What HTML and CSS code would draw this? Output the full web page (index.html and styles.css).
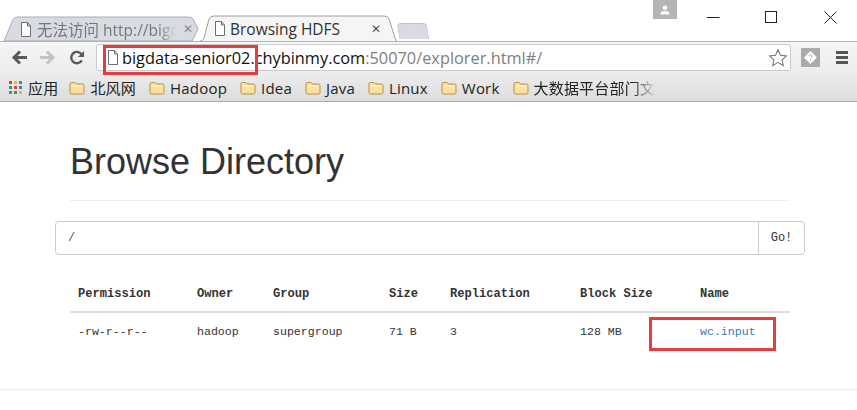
FILE: index.html
```html
<!DOCTYPE html>
<html lang="zh">
<head>
<meta charset="utf-8">
<title>Browsing HDFS</title>
<link rel="stylesheet" href="styles.css">
</head>
<body>
<svg width="0" height="0" class="defs">
  <symbol id="doc" viewBox="0 0 12 15"><path d="M1.500.5h6l3 3.500v10.500h-9z M7.500.5v3.500h3" fill="#fff" stroke="#6e6e6e"/></symbol>
  <symbol id="folder" viewBox="0 0 16 14"><path d="M1 3a1.500 1.500 0 0 1 1.500-1.500h3.500l1.500 1.500h6a1.500 1.500 0 0 1 1.500 1.500v7a1.500 1.500 0 0 1-1.500 1.500h-11a1.500 1.500 0 0 1-1.500-1.500z" fill="#fbdf9f" stroke="#b8913f"/><path d="M2 5h12" stroke="#fff3d4"/></symbol>
</svg>
<header class="chrome">
  <div class="tabstrip">
    <div class="tab tab-off">
      <svg class="tab-bg" viewBox="0 0 200 24" preserveAspectRatio="none"><path d="M0 24 L9 3 Q10 0 14 0 H188 Q192 0 193 2 L198 12 L192 24 Z" fill="#d8dce2" stroke="#a9adb3"/></svg>
      <svg class="ico-doc"><use href="#doc"/></svg>
      <span class="tab-title tab-fade">无法访问 http://bigd</span>
      <span class="tab-x x-off">✕</span>
    </div>
    <div class="tab tab-on">
      <svg class="tab-bg" viewBox="0 0 197 25" preserveAspectRatio="none"><path d="M0 25 H1 Q3 25 4 22 L9 3 Q10 0 14 0 H184 Q188 0 189 3 L195 22 Q196 25 197 25" fill="#f5f5f5" stroke="#a0a0a0"/></svg>
      <svg class="ico-doc"><use href="#doc"/></svg>
      <span class="tab-title">Browsing HDFS</span>
      <span class="tab-x">✕</span>
    </div>
    <div class="newtab"></div>
    <div class="winbtns">
      <div class="avatar"><svg width="12" height="10" viewBox="0 0 12 10"><circle cx="6" cy="2.800" r="2.300" fill="#fff"/><path d="M1.500 9.500c0-3 2-3.500 4.500-3.500s4.500.5 4.500 3.500z" fill="#fff"/></svg></div>
      <svg class="win" width="13" height="13" viewBox="0 0 13 13"><path d="M0 6.500h12.500" stroke="#222"/></svg>
      <svg class="win win-max" width="13" height="13" viewBox="0 0 13 13"><rect x=".5" y=".5" width="11" height="11" fill="none" stroke="#222"/></svg>
      <svg class="win win-close" width="13" height="13" viewBox="0 0 13 13"><path d="M.5.500l12 12M12.500.500l-12 12" stroke="#222"/></svg>
    </div>
  </div>
  <div class="toolbar">
    <svg class="nav" width="16" height="15" viewBox="0 0 16 15"><path d="M16 7.500H4M9 1.500l-6 6 6 6" fill="none" stroke="#5a5a5a" stroke-width="3"/></svg>
    <svg class="nav" width="16" height="15" viewBox="0 0 16 15"><path d="M0 7.500h12M7 1.500l6 6-6 6" fill="none" stroke="#c4c4c4" stroke-width="3"/></svg>
    <svg class="nav nav-last" width="16" height="17" viewBox="0 0 17 17"><path d="M13.600 11.500a6 6 0 1 1 .2-5.500" fill="none" stroke="#5a5a5a" stroke-width="2.600"/><path d="M16 1.500v6.500h-6.500z" fill="#5a5a5a"/></svg>
    <div class="omnibox">
      <svg class="ico-doc omni-doc"><use href="#doc"/></svg>
      <span class="url"><span class="url-host">bigdata-senior02.chybinmy.com</span>:50070/explorer.html#/</span>
      <svg class="star" width="20" height="19" viewBox="0 0 22 20"><path d="M11 1.500l2.800 6 6.500.7-4.800 4.400 1.300 6.400L11 15.400l-5.800 3.600 1.300-6.400-4.800-4.400 6.500-.7z" fill="#fff" stroke="#777" stroke-width="1.200"/></svg>
    </div>
    <div class="ext"><svg width="13" height="13" viewBox="0 0 13 13"><path d="M6.500 0L13 6.500 6.500 13 0 6.500z" fill="#fff"/><path d="M5 5.200a1.500 1.500 0 1 1 2 1.400c-.4.200-.5.500-.5 1M6.500 8.700v1" stroke="#aaa" fill="none"/></svg></div>
    <div class="menu"><i></i><i></i><i></i></div>
  </div>
  <div class="bookmarks">
    <svg class="apps" width="14" height="14" viewBox="0 0 14 14"><g>
      <rect x="0" y="0" width="3" height="3" fill="#d9453a"/><rect x="5" y="0" width="3" height="3" fill="#f0b429"/><rect x="10" y="0" width="3" height="3" fill="#3c9a4e"/>
      <rect x="0" y="5" width="3" height="3" fill="#3c9a4e"/><rect x="5" y="5" width="3" height="3" fill="#d9453a"/><rect x="10" y="5" width="3" height="3" fill="#3f7fdc"/>
      <rect x="0" y="10" width="3" height="3" fill="#3f7fdc"/><rect x="5" y="10" width="3" height="3" fill="#3c9a4e"/><rect x="10" y="10" width="3" height="3" fill="#f0b429"/></g></svg>
    <span class="bm bm-first">应用</span>
    <span class="bm"><svg class="folder"><use href="#folder"/></svg>北风网</span>
    <span class="bm"><svg class="folder"><use href="#folder"/></svg>Hadoop</span>
    <span class="bm"><svg class="folder"><use href="#folder"/></svg>Idea</span>
    <span class="bm"><svg class="folder"><use href="#folder"/></svg>Java</span>
    <span class="bm"><svg class="folder"><use href="#folder"/></svg>Linux</span>
    <span class="bm"><svg class="folder"><use href="#folder"/></svg>Work</span>
    <span class="bm bm-last"><svg class="folder"><use href="#folder"/></svg><span class="bm-fade">大数据平台部门文</span></span>
  </div>
</header>
<main class="page">
  <div class="container">
    <div class="page-header"><h1>Browse Directory</h1></div>
    <div class="input-group">
      <div class="input">/</div>
      <button class="go" type="button">Go!</button>
    </div>
    <table class="listing">
      <thead>
        <tr><th class="c1">Permission</th><th class="c2">Owner</th><th class="c3">Group</th><th class="c4">Size</th><th class="c5">Replication</th><th class="c6">Block Size</th><th class="c7">Name</th></tr>
      </thead>
      <tbody>
        <tr><td>-rw-r--r--</td><td>hadoop</td><td>supergroup</td><td>71 B</td><td>3</td><td>128 MB</td><td><a href="#">wc.input</a></td></tr>
      </tbody>
    </table>
  </div>
  <hr class="rule">
</main>
<div class="mark mark-url"></div>
<div class="mark mark-file"></div>
</body>
</html>
```
FILE: styles.css
```css
* { box-sizing: border-box; }
html, body { margin: 0; padding: 0; }
body { width: 857px; height: 410px; overflow: hidden; background: #fff; font-family: "Open Sans", "Noto Sans CJK SC", sans-serif; position: relative; }
.defs { position: absolute; }

.tabstrip { height: 41px; display: flex; align-items: flex-end; padding-left: 4px; position: relative; }
.tab { position: relative; height: 24px; display: flex; align-items: center; font-size: 15.500px; color: #333; flex: none; }
.tab-off { width: 196px; padding: 0 0 0 16px; color: #777; }
.tab-on { width: 197px; margin-left: 0; padding-left: 14px; height: 25px; z-index: 1; }
.tab-bg { position: absolute; inset: 0; width: 100%; height: 100%; overflow: visible; }
.ico-doc { position: relative; width: 12px; height: 15px; flex: none; }
.tab-title { position: relative; margin-left: 5px; white-space: nowrap; }
.tab-off .tab-title { width: 139px; }
.tab-on .tab-title { width: 130px; margin-left: 4px; }
.tab-fade { -webkit-mask-image: linear-gradient(to right, #000 88%, transparent); mask-image: linear-gradient(to right, #000 88%, transparent); }
.tab-x { position: relative; margin-left: 11px; font-size: 12px; font-family: "DejaVu Sans", sans-serif; color: #555; font-weight: 700; }
.x-off { margin-left: 7px; color: #8a8a8a; }
.newtab { width: 30px; height: 16px; margin: 0 0 2px 1px; background: #d8dce2; border: 1px solid #c0c4ca; border-bottom: 0; border-radius: 4px 4px 0 0; transform: skewX(10deg); flex: none; }
.winbtns { position: absolute; top: 0; right: 0; height: 30px; display: flex; align-items: flex-start; }
.avatar { width: 24px; height: 19px; background: #b5b5b5; display: flex; align-items: center; justify-content: center; margin-right: 30px; }
.win { margin-top: 11px; flex: none; }
.win-max { margin-left: 45px; }
.win-close { margin: 11px 20px 0 46px; }

.toolbar { height: 33px; border-top: 1px solid #b4b4b4; background: linear-gradient(#f6f6f6, #ececec); display: flex; align-items: center; padding: 0 0 1px 11px; }
.nav { margin-right: 13px; flex: none; }
.nav-last { margin-right: 11px; }
.omnibox { width: 695px; height: 27px; background: #fff; border: 1px solid #c9c9c9; border-radius: 3px; display: flex; align-items: center; padding-left: 10px; padding-right: 2px; }
.omni-doc { margin-right: 3px; }
.url { flex: 1; font-size: 16.330px; color: #808080; white-space: nowrap; }
.url-host { color: #111; }
.star { flex: none; }
.ext { width: 19px; height: 19px; margin-left: 10px; background: #ababab; display: flex; align-items: center; justify-content: center; }
.menu { margin-left: 16px; width: 12px; display: flex; flex-direction: column; gap: 2px; }
.menu i { height: 3px; background: #555; display: block; }

.bookmarks { height: 28px; background: linear-gradient(#ececec, #dcdcdc); border-bottom: 1px solid #a8a8a8; display: flex; align-items: center; padding-left: 9px; font-size: 15px; letter-spacing: .2px; color: #222; white-space: nowrap; }
.apps { flex: none; margin-right: 5px; }
.bm { display: flex; align-items: center; margin-right: 13px; }
.bm-first { margin-right: 11px; }
.folder { width: 16px; height: 14px; margin-right: 5px; flex: none; }
.bm-last { margin-right: 0; }
.bm-fade { -webkit-mask-image: linear-gradient(to right, #000 82%, transparent); mask-image: linear-gradient(to right, #000 82%, transparent); }

.page { color: #333; }
.container { width: 750px; margin-left: 55px; }
.page-header { margin: 0 15px; height: 99px; padding-top: 38px; border-bottom: 1px solid #eee; }
h1 { margin: 0; font: 400 36px/44px "Liberation Sans", sans-serif; color: #333; }
.input-group { display: flex; height: 34px; margin-top: 20px; font: 12px "Liberation Mono", "Noto Sans CJK SC", monospace; color: #555; }
.input { flex: 1; border: 1px solid #ccc; border-radius: 4px 0 0 4px; padding: 9px 12px; line-height: 14px; }
.go { width: 47px; margin-left: -1px; background: #fff; border: 1px solid #ccc; border-radius: 0 4px 4px 0; font: inherit; color: #333; padding: 0; }
.listing { margin: 22px 15px 0; width: 720px; border-collapse: collapse; table-layout: fixed; font: 11.600px/18px "Liberation Mono", "Noto Sans CJK SC", monospace; color: #333; }
.listing th { text-align: left; height: 35px; padding: 0 8px; border-bottom: 2px solid #ddd; font-weight: 700; font-size: 12.100px; }
.listing td { height: 38px; padding: 0 8px; }
.c1 { width: 119px; } .c2 { width: 76px; } .c3 { width: 116px; } .c4 { width: 61px; } .c5 { width: 130px; } .c6 { width: 120px; } .c7 { width: 98px; }
.listing a { color: #337ab7; text-decoration: none; }
.rule { margin: 39px 0 0; border: 0; border-top: 1px solid #eee; }

.mark { position: absolute; border: 3px solid #e63b41; }
.mark-url { left: 103px; top: 45px; width: 155px; height: 30px; }
.mark-file { left: 649px; top: 317px; width: 127px; height: 34px; }
```
